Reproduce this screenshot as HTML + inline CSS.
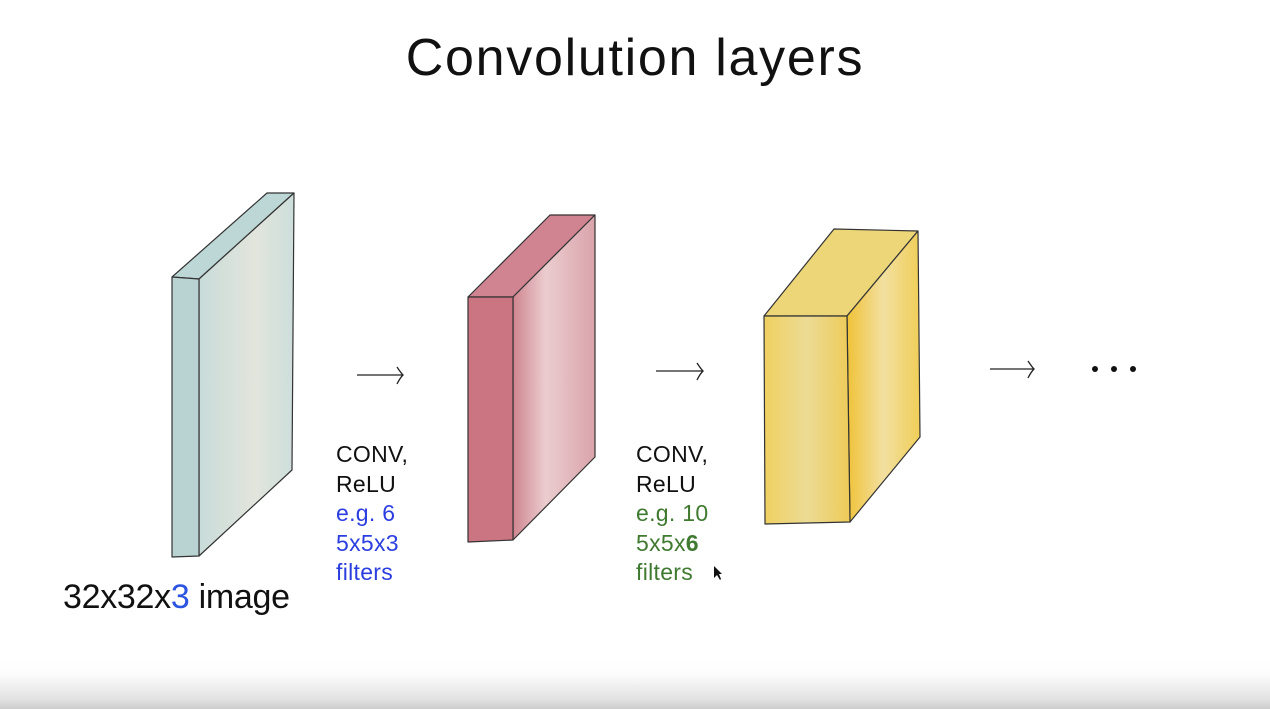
<!DOCTYPE html>
<html><head><meta charset="utf-8"><style>
html,body{margin:0;padding:0}
body{width:1270px;height:709px;position:relative;overflow:hidden;background:#fff;font-family:"Liberation Sans",sans-serif}
.t{position:absolute;white-space:nowrap}
#grad{position:absolute;left:0;top:660px;width:1270px;height:49px;background:linear-gradient(#fff,#fcfcfc 30%,#e2e2e2 80%,#cdcdcd)}
.lab{position:absolute;font-size:23px;line-height:29.5px;letter-spacing:0.3px}
</style></head><body>
<div id="grad"></div>
<div class="t" style="left:0;width:1270px;text-align:center;top:28px;font-size:52px;letter-spacing:1.7px;color:#111">Convolution layers</div>
<svg width="1270" height="709" style="position:absolute;left:0;top:0">
<defs>
<linearGradient id="bf" x1="0" x2="1"><stop offset="0" stop-color="#c9dcd9"/><stop offset=".6" stop-color="#e2e5dc"/><stop offset="1" stop-color="#cddedb"/></linearGradient>
<linearGradient id="rf" x1="0" x2="1"><stop offset="0" stop-color="#cf8590"/><stop offset=".4" stop-color="#ebcdcf"/><stop offset="1" stop-color="#d9a3aa"/></linearGradient>
<linearGradient id="yf" x1="0" x2="1"><stop offset="0" stop-color="#efd060"/><stop offset=".5" stop-color="#ecdb95"/><stop offset="1" stop-color="#eecb58"/></linearGradient>
<linearGradient id="yr" x1="0" x2="1"><stop offset="0" stop-color="#f0c238"/><stop offset=".5" stop-color="#f2e0a0"/><stop offset="1" stop-color="#f0ce58"/></linearGradient>
</defs>
<g stroke="#333" stroke-width="1.2" stroke-linejoin="round">
<polygon points="172,277 199,279 294,193 267,193" fill="#bdd6d6"/>
<polygon points="199,279 294,193 292,470 199,556" fill="url(#bf)"/>
<polygon points="172,277 199,279 199,556 172,557" fill="#b9d3d2"/>
<polygon points="468,297 513,297 595,215 550,215" fill="#d08390"/>
<polygon points="513,297 595,215 595,457 513,540" fill="url(#rf)"/>
<polygon points="468,297 513,297 513,540 468,542" fill="#cb7482"/>
<polygon points="764,316 847,316 918,231 834,229" fill="#ecd678"/>
<polygon points="847,316 918,231 920,437 850,522" fill="url(#yr)"/>
<polygon points="764,316 847,316 850,522 765,524" fill="url(#yf)"/>
</g>
<g stroke="#222" stroke-width="1.3" fill="none">
<path d="M357,375 H403 M397,367 Q401,373 403,375 Q400,378 397,384"/>
<path d="M656,371 H703 M697,363 Q701,369 703,371 Q700,374 697,380"/>
<path d="M990,369 H1034 M1028,361 Q1032,367 1034,369 Q1031,372 1028,378"/>
</g>
<g fill="#111"><circle cx="1095" cy="369" r="3"/><circle cx="1114" cy="369" r="3"/><circle cx="1133" cy="369" r="3"/></g>
<path d="M714,566 L714,578 L717,575 L720,580 L721,579 L719,574 L722,574 Z" fill="#111"/>
</svg>
<div class="lab" style="left:336px;top:440px"><span style="color:#111">CONV,<br>ReLU</span><br><span style="color:#2b3ee0">e.g. 6<br>5x5x3<br>filters</span></div>
<div class="lab" style="left:636px;top:440px"><span style="color:#111">CONV,<br>ReLU</span><br><span style="color:#3f7a30">e.g. 10<br>5x5x<b>6</b><br>filters</span></div>
<div class="t" style="left:63px;top:578px;font-size:34px;color:#111;letter-spacing:-0.3px">32x32x<span style="color:#2b55e0">3</span> image</div>
</body></html>
